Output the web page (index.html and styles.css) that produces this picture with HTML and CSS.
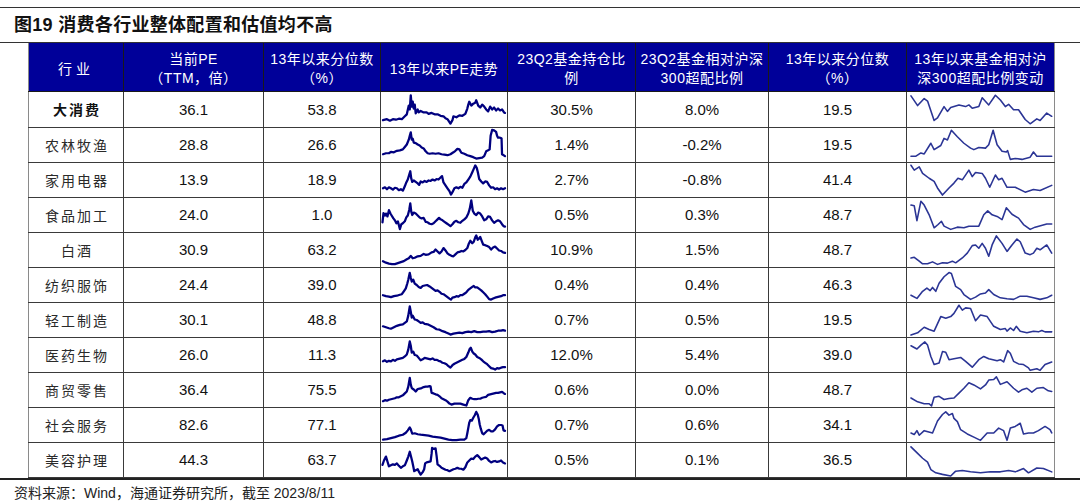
FILE: index.html
```html
<!DOCTYPE html>
<html lang="zh-CN">
<head>
<meta charset="utf-8">
<title>图19 消费各行业整体配置和估值均不高</title>
<link rel="stylesheet" href="styles.css">
</head>
<body>
<div class="page">
  <h1 class="title">图<span class="num">19</span> 消费各行业整体配置和估值均不高</h1>
  <div class="table-wrap">
    <table class="grid">
      <colgroup>
        <col class="c-name"><col class="c-pe"><col class="c-pct"><col class="c-trend">
        <col class="c-hold"><col class="c-over"><col class="c-pct2"><col class="c-chg">
      </colgroup>
      <thead>
        <tr>
          <th class="h-name">行业</th>
          <th>当前PE<br>（TTM，倍）</th>
          <th>13年以来分位数<br>（%）</th>
          <th>13年以来PE走势</th>
          <th>23Q2基金持仓比<br>例</th>
          <th>23Q2基金相对沪深<br>300超配比例</th>
          <th>13年以来分位数<br>（%）</th>
          <th>13年以来基金相对沪<br>深300超配比例变动</th>
        </tr>
      </thead>
      <tbody>
        <tr class="first">
          <td class="name bold">大消费</td><td>36.1</td><td>53.8</td>
          <td class="spark"><svg viewBox="0 0 127 35" preserveAspectRatio="none"><polyline class="pe" points="2,29 6,28 9,29.5 12,28 15,28.5 18,27.5 21,28 24,25 26,23 28,14 29,18 30,3.5 31,15 32,10 33,17 34,13 35,22 37,18 38,21 40,19.5 43,21 46,21 48,22.5 51,21.5 54,23 57,23 60,24.5 63,25 65,27 67,28 69,31 70,32.5 72,29 73,25 76,26 79,24 82,24.5 85,22.5 87,17 88,13 89,10 91,14 93,12 95,11 96,8.5 98,14 100,16 102,13 104,15 106,18 108,20 110,15 112,18 114,16 116,19 118,17 120,19 122,18 124,21 125,21.5"/></svg></td>
          <td>30.5%</td><td>8.0%</td><td>19.5</td>
          <td class="spark"><svg viewBox="0 0 148 35" preserveAspectRatio="none"><polyline class="fund" points="4,4 10.7,14 17.3,6.7 20.7,9.3 27.3,29.3 30.7,26.7 37.3,15 40.7,20 44,16 52.3,13.3 59,15 62.3,13.3 65.7,16.7 72.3,15 75.7,6 82.3,13.3 89,3.3 94,8.3 99,15 102.3,12.7 107.3,18.3 112.3,18.3 119,28.3 124,32.7 130.7,27.7 134,29.3 140.7,21.7 145.7,25"/></svg></td>
        </tr>
        <tr>
          <td class="name">农林牧渔</td><td>28.8</td><td>26.6</td>
          <td class="spark"><svg viewBox="0 0 127 35" preserveAspectRatio="none"><polyline class="pe" points="2,27 5,26 8,26 10,24.5 13,25 16,23.5 19,23 22,22 24,19.5 26,17 28,12 29,8 30,4.5 31,12 32,11 33,15 35,15.5 37,17 39,18 41,20 43,21 45,24 47,26 49,26.5 52,26 55,26.5 58,26 61,27 64,27.5 67,28 70,27 73,25 75,23.5 77,21.5 79,22 81,25.5 84,26.5 87,28 90,29 93,30 96,31.5 99,31 102,30.5 104,29 106,24 108,23 109.5,22 110.5,8 112,2 114,2.5 116,4 117,8 118,10 120,10 121.5,10.5 122,27 125,29"/></svg></td>
          <td>1.4%</td><td>-0.2%</td><td>19.5</td>
          <td class="spark"><svg viewBox="0 0 148 35" preserveAspectRatio="none"><polyline class="fund" points="4,29 9,29 14,25.7 17.3,26.7 24,15.7 27.3,22.3 34,18 37.3,10.7 40.7,12.3 44.7,2.3 50.7,9 57.3,15.7 64,20.7 67.3,22.3 72.3,20 79,20.7 82.3,17.3 86.7,2.3 90.7,17.3 95.7,24 100,24.7 101.3,23.3 104,32.3 109,31.3 115.7,32.3 124,30 127.3,24.7 130.7,29 145.7,29"/></svg></td>
        </tr>
        <tr>
          <td class="name">家用电器</td><td>13.9</td><td>18.9</td>
          <td class="spark"><svg viewBox="0 0 127 35" preserveAspectRatio="none"><polyline class="pe" points="2,26 4,25 6,27 8,25 10,26 12,27.5 14,25.5 16,26 18,28 20,27 22,28.5 24,24 25.5,20 27,17 28.5,12 29.5,8.5 30.5,16 31.5,19.5 33,18 35,19.5 37,21 38.5,22.5 40,19 42,20 44,18.5 46,19.5 48,18 50,18.5 52,17 54,18 56,16.5 58,17 60,15 61.5,13.5 63,20 65,23 67,26 69,29 70.5,32.5 72,30 74,26 76,25 78,26 80,24.5 82,25.5 84,21.5 86,20 88,17 90,14 92,9.5 93.5,6 95,2.5 96.5,5 97.5,9 99,16.5 101,19 103,21 105,19 107,19.5 109,23 111,25.5 113,25 115,27 117,26 119,27.5 121,26 123,27 125,26"/></svg></td>
          <td>2.7%</td><td>-0.8%</td><td>41.4</td>
          <td class="spark"><svg viewBox="0 0 148 35" preserveAspectRatio="none"><polyline class="fund" points="4,2.3 7.3,7.3 12.3,4 15.7,10.7 22.3,15.7 27.3,19 30.7,25.7 35.7,33 42.3,25.7 47.3,20.7 51.3,15.7 55.7,17.3 62.3,7.3 65.7,14 69,9.7 75.7,10.7 79,15.7 83.3,25 89,12.3 92.3,17.3 95.7,15.7 100.7,25 109,25 119,30 127.3,27.3 134,28.3 145.7,23"/></svg></td>
        </tr>
        <tr>
          <td class="name">食品加工</td><td>24.0</td><td>1.0</td>
          <td class="spark"><svg viewBox="0 0 127 35" preserveAspectRatio="none"><polyline class="pe" points="1.5,25 2.5,15.5 4,18 5,16 6.5,19 8,12.5 9.5,16 11,18.5 12.5,21 14,23 15.5,26 17,24 19,32 20.5,27 22,26 24,24 25.5,20 27,18 28.5,12 29.5,5.5 30.5,14 31.5,17.5 33,15 35,16 37,18 39,20 41,21 43,20.5 45,24.5 47,25 49,26.5 51,27 53,26 55,24 57,22 58.5,20.5 60,22 62,23 64,24.5 66,26 68,27.5 70,29 72,27 74,24.5 76,23.5 78,25 80,25.5 82,23.5 84,22 86,20 88,16 89.5,11 91,2.5 92.5,13 94,16 96,17.5 98,15 100,16 102,19 104,23 106,22 108,19 110,19.5 112,23 114,25.5 116,24 118,23 120,24 122,27 123.5,29 125,29.5"/></svg></td>
          <td>0.5%</td><td>0.3%</td><td>48.7</td>
          <td class="spark"><svg viewBox="0 0 148 35" preserveAspectRatio="none"><polyline class="fund" points="4,7.3 7.3,8 10,23.3 14,3.3 17.3,7.3 22.3,17.3 27.3,30.7 31.3,27.3 34.7,24 37.3,29 44,32.3 50.7,30 57.3,30.7 62.3,29 72.3,29 77.3,17.3 81.3,13.3 85.7,17.3 90.7,19 95.7,22.3 100,10 105.7,16.7 112.3,20.7 117.3,27.3 124,32.3 129,30 140.7,26.7 145.7,26.7"/></svg></td>
        </tr>
        <tr>
          <td class="name">白酒</td><td>30.9</td><td>63.2</td>
          <td class="spark"><svg viewBox="0 0 127 35" preserveAspectRatio="none"><polyline class="pe" points="2,29 5,30.5 8,31.5 11,32 14,32 17,31 20,30 23,29 26,27 28,26 30,23.5 32,26 34,25.5 37,24 40,23.5 43,21.5 45,22.5 48,22 51,20 53,19.5 55,17 57,19 59,21 61,19 63,15.5 65,18 67,21 69,22.5 71,23.5 73,24 75,22 77,20 79,19.5 81,18.5 83,19 85,17.5 87,15.5 88.5,11 90,8 92,10.5 93.5,9 95,4.5 96,2.5 97.5,7 99,5.5 100,4 101.5,8 103,12 105,12.5 107,13.5 109,14.5 111,17 113,15 115,14 117,16 119,18 121,18.5 123,20 125,20.5"/></svg></td>
          <td>10.9%</td><td>1.5%</td><td>48.7</td>
          <td class="spark"><svg viewBox="0 0 148 35" preserveAspectRatio="none"><polyline class="fund" points="4,25.7 7.3,25 12.3,29 15.7,31.7 20.7,31.7 25.7,29.7 30.7,32.3 35.7,30.7 40.7,31 45.7,29 49,30.7 55.7,25.7 60.7,20.7 65.7,13 69,12.3 72.3,15.7 75.7,10.7 79,15.7 82.3,24 85.7,12.3 90,3 95.7,10.7 100.7,19 105.7,12.3 110.7,6.3 114,9 119,20.7 124,22.3 127.3,20.7 130.7,15.7 134,17.3 140.7,12.3 145.7,20.7"/></svg></td>
        </tr>
        <tr>
          <td class="name">纺织服饰</td><td>24.4</td><td>39.0</td>
          <td class="spark"><svg viewBox="0 0 127 35" preserveAspectRatio="none"><polyline class="pe" points="2,28 5,29 8,29.5 10,30 13,29 16,28.5 19,27.5 21,27 23,24 25,21 26.5,16 27.5,12 29,5 30,10 31,14 32.5,12 34,16 36,17.5 38,19.5 40,20.5 42,18.5 44,18 46.5,17.5 49,19 51,20.5 53,22 55,23.5 57,23 59,24.5 61,26.5 63,27 65,28.5 67,30 69,31.5 70.5,32.5 72,30.5 74,30 76,29 78,29.5 80,28 82,28 84,26.5 86,25 88,22.5 90,21 92,19.5 93.5,18.5 95,20 97,20 99,21.5 101,23 103,25 105,27 107,29.5 109,32 111,32.5 113,31.5 115,30.5 117,30 119,29.5 121,29 123,28 125,28"/></svg></td>
          <td>0.4%</td><td>0.4%</td><td>46.3</td>
          <td class="spark"><svg viewBox="0 0 148 35" preserveAspectRatio="none"><polyline class="fund" points="4,28 10,31.3 15.7,24 20,20.7 23.3,23.3 25.7,20 29,24 32.3,15.7 37.3,9 42.3,4.7 44.7,5.7 49,19 54,22.3 57.3,27.3 64,32.3 69,30 74,26.7 79,25.7 82.3,22.3 87.3,27.3 94,30.7 100.7,31.7 107.3,32.3 114,29 120.7,29 127.3,30.7 134,32.3 140.7,30.7 145.7,28"/></svg></td>
        </tr>
        <tr>
          <td class="name">轻工制造</td><td>30.1</td><td>48.8</td>
          <td class="spark"><svg viewBox="0 0 127 35" preserveAspectRatio="none"><polyline class="pe" points="2,24 5,25 8,26 10,26.5 13,25 16,23.5 19,22.5 22,22 24,20.5 26,19 27.5,13 29,3.5 30,9 31,15 32,13 34,17 36,17.5 38,19 40,20.5 42,20 44,21.5 47,22 50,23.5 53,25 56,27 59,27.5 62,29 65,30 68,31.5 70,32.5 73,31.5 76,31 79,30.5 82,31 85,30 88,29.5 91,30 94,29 97,30 100,30 103,29.5 106,29.5 109,29 112,30 115,29.5 118,28.5 121,28.5 123,28 125,28.5"/></svg></td>
          <td>0.7%</td><td>0.5%</td><td>19.5</td>
          <td class="spark"><svg viewBox="0 0 148 35" preserveAspectRatio="none"><polyline class="fund" points="4,33 10.7,30.7 17.3,25 22.3,27.3 27.3,29 34,14 39,15.7 44,14 47.3,10.7 52.3,2.3 55.7,7.3 59,5 64,5.7 69,18.3 74,12.3 80.7,14 87.3,24 94,27.3 99,26.3 100.7,29 104,25.7 107.3,28.3 110,24 114,29 120.7,30.7 127.3,29 132.3,29.7 135.7,28.3 139,29.7 145.7,29.7"/></svg></td>
        </tr>
        <tr>
          <td class="name">医药生物</td><td>26.0</td><td>11.3</td>
          <td class="spark"><svg viewBox="0 0 127 35" preserveAspectRatio="none"><polyline class="pe" points="2,24 4,23 6,24.5 8,23.5 10,24 12,22.5 14,23.5 16,22 18,21.5 20,21 22,20.5 24,19 26,17 27.5,12 29,3.5 30,8 31,15 32.5,14 34,17.5 36,18 38,20.5 40,23 42,22 44,20.5 46,21 48,21.5 50,22 52,21 54,22.5 56,22.5 58,23.5 60,24 62,25.5 64,26 66,27 68,29 70,30.5 72,28 74,26.5 76,25.5 78,24.5 80,23.5 82,22.5 84,21.5 86,19.5 88,15 89.5,11 90.5,10 92,14 93.5,16 95,17 97,19.5 99,20.5 101,22 103,24 105,25.5 107,27 109,29 111,31 113,31.5 115,32.5 117,31 119,31.5 121,30.5 123,30 125,30"/></svg></td>
          <td>12.0%</td><td>5.4%</td><td>39.0</td>
          <td class="spark"><svg viewBox="0 0 148 35" preserveAspectRatio="none"><polyline class="fund" points="4,8 10,11.3 14,7.3 18,4 20.7,7.3 24,19 27.3,27.3 32.3,25.7 35.7,14 39,14.7 42.3,22.3 47.3,21.3 54,20 59,24 65.7,30 72.3,22.3 77.3,19 82.3,21.3 90.7,23.3 94,22.3 97.3,24.7 101.3,13 104,15.7 107.3,24 112.3,26.7 117.3,27.3 122.3,30.7 124,33.3 130.7,31.7 134,33.3 139,27.3 145.7,24.7"/></svg></td>
        </tr>
        <tr>
          <td class="name">商贸零售</td><td>36.4</td><td>75.5</td>
          <td class="spark"><svg viewBox="0 0 127 35" preserveAspectRatio="none"><polyline class="pe" points="2,29 4,28 6,28.5 8,27.5 10,27 12,26.5 14,26 16,25 18,25 20,24 22,23 24,21 26,19 27.5,14 29,5 30,12 31,15.5 33,17 35,19 37,16.5 39,16 41,15.5 43,14.5 45,14 47,14 49,13.5 50,14 51,20.5 53,21 55,22 57,22.5 59,24 61,26 63,27 65,28 67,29.5 69,31.5 71,32.5 74,31.5 77,31.5 80,31.5 83,32.5 86,33.5 88,28 90,25.5 92,26.5 94,27 96,27 98,26.5 100,26.5 102,25.5 104,25 106,24.5 108,22.5 110,22 112,21.5 114,21 116,20.5 118,20.5 120,20 122,19.5 124,21 125,21.5"/></svg></td>
          <td>0.6%</td><td>0.0%</td><td>48.7</td>
          <td class="spark"><svg viewBox="0 0 148 35" preserveAspectRatio="none"><polyline class="fund" points="4,25.7 10.7,29.7 17.3,31.7 22.3,31.7 24.7,34 27.3,25 32.3,24 37.3,27.3 42.3,26.3 47.3,25.7 52.3,20.7 57.3,15.7 62.3,10 67.3,12.3 74,16.3 79,12.3 82.3,7.3 87.3,6.7 90,4 94,11.7 100.7,9 107.3,15.7 112.3,19.7 115.7,17.3 120.7,15.7 125.7,19.7 130.7,15.7 137.3,15 142.3,18.3 145.7,19"/></svg></td>
        </tr>
        <tr>
          <td class="name">社会服务</td><td>82.6</td><td>77.1</td>
          <td class="spark"><svg viewBox="0 0 127 35" preserveAspectRatio="none"><polyline class="pe" points="2,32.5 6,32 10,31 14,30 18,28.5 22,27.5 25,25.5 27,23 29,20 30,22 31.5,26.5 34,26 37,27 40,27.5 44,28 48,28.5 52,29.5 56,30 60,30.5 64,31.5 68,32.5 72,33 76,33 80,32.5 84,32.5 86,31 87,26 88,20.5 89,15 90,12.5 91.5,13 93,10 94.5,7.5 96,4 97.5,7 98.5,11 99.5,17 100.5,21 102,26 103.5,27 105,25.5 107,23.5 109,22.5 111,24 113,24 115,22 117,19 119,17.5 121,17.5 122.5,18 123.5,23 125,23.5"/></svg></td>
          <td>0.7%</td><td>0.6%</td><td>34.1</td>
          <td class="spark"><svg viewBox="0 0 148 35" preserveAspectRatio="none"><polyline class="fund" points="4,25.7 7.3,27.3 10,23.3 12.3,28 17.3,23.3 25.7,25.7 30.7,13.3 35.7,6.7 39,4 42.3,7.3 45.7,5.7 47.3,10.7 50.7,14 54,22.3 60.7,26.7 67.3,30 74,33.3 80.7,25.7 87.3,25.7 92.3,20.7 97.3,23.3 100.7,33.3 104,20.7 109,19 114,15.7 117.3,26.7 122.3,25.7 127.3,25.7 132.3,23.3 139,19 144,22.3 145.7,25.7"/></svg></td>
        </tr>
        <tr>
          <td class="name">美容护理</td><td>44.3</td><td>63.7</td>
          <td class="spark"><svg viewBox="0 0 127 35" preserveAspectRatio="none"><polyline class="pe" points="1.5,22.5 3,18 5,14 6.5,19 8,24 10,23 12,22 14,22.5 16,21 18,23.5 20,25.5 22,24 24,23 26,18 27.5,14 29,9 30.5,15 31.5,19 32.5,24 33.5,29 35,28 37,27 38.5,30 40,32.5 42,30 43.5,27 44.5,21 46,20 48,19.5 50,19 51,11 51.5,5 53,6 55,5.5 56,13 57,22 59,23.5 61,25.5 63,26.5 65,27.5 67,28 69,29 71,28 73,27 75,26.5 77,25.5 79,26.5 81,26.5 83,27.5 85,25 87,20 89,18 91,16 93,16.5 95,14 97,12.5 99,14.5 101,17 103,16 105,15 107,16 109,18.5 111,20 113,19 115,18.5 117,19.5 119,19 121,18 123,20 125,21"/></svg></td>
          <td>0.5%</td><td>0.1%</td><td>36.5</td>
          <td class="spark"><svg viewBox="0 0 148 35" preserveAspectRatio="none"><polyline class="fund" points="4,4 10.7,10.7 15.7,15.7 20.7,19.7 24,27.3 29,30.7 35.7,32.3 44,34 49,29 55.7,28.3 64,29.7 74,30.7 84,29.7 94,29.7 102.3,28.3 109,29.7 117.3,26.3 122.3,30.7 130.7,25.7 137.3,26.3 145.7,29.7"/></svg></td>
        </tr>
      </tbody>
    </table>
  </div>
  <p class="source">资料来源：Wind，海通证券研究所，截至 2023/8/11</p>
</div>
</body>
</html>
```

FILE: styles.css
```css
* { box-sizing: border-box; }

body {
  margin: 0;
  background: #ffffff;
  color: #111111;
  font-family: "Liberation Sans", "Noto Sans CJK SC", sans-serif;
}

.page {
  width: 1080px;
  padding-top: 7px;
}

.title {
  margin: 0;
  height: 36px;
  padding-left: 14px;
  border-top: 1px solid #333333;
  border-bottom: 1px solid #333333;
  font-family: "Liberation Sans", "Noto Sans CJK SC", sans-serif;
  font-size: 18px;
  font-weight: bold;
  line-height: 34px;
  color: #111111;
  letter-spacing: 0.3px;
}

.title .num {
  font-family: "Liberation Sans", sans-serif;
}

.table-wrap {
  padding-left: 28px;
}

.grid {
  border-collapse: collapse;
  table-layout: fixed;
  width: 1026px;
}

.c-name { width: 95px; }
.c-pe { width: 140px; }
.c-pct { width: 117px; }
.c-trend { width: 127px; }
.c-hold { width: 128px; }
.c-over { width: 133px; }
.c-pct2 { width: 138px; }
.c-chg { width: 148px; }

.grid th {
  height: 48px;
  padding: 5px 0 0;
  background: #000099;
  color: #ffffff;
  border: 1px solid #1a1a1a;
  border-top: 0;
  font-family: "Liberation Sans", "Noto Sans CJK SC", sans-serif;
  font-size: 14px;
  font-weight: normal;
  line-height: 19px;
  letter-spacing: 0.5px;
  white-space: nowrap;
  text-align: center;
  vertical-align: middle;
}

.grid th.h-name {
  letter-spacing: 4px;
}

.grid td {
  height: 35px;
  padding: 0;
  border: 1px solid #3a3a3a;
  text-align: center;
  vertical-align: middle;
  font-size: 15px;
  color: #111111;
}

.grid tr.first td {
  height: 36px;
}

.grid td.name {
  font-family: "Noto Sans CJK SC", sans-serif;
  font-size: 14px;
  letter-spacing: 2px;
  color: #2a2a2a;
  padding-left: 2px;
}

.grid td.bold {
  font-weight: bold;
  color: #111111;
}

.grid tr > :first-child {
  border-left-color: #8a8a8a;
}

.grid tr > :last-child {
  border-right-color: #8a8a8a;
}

.grid td.spark {
  padding: 0;
}

.spark svg {
  display: block;
  width: 100%;
  height: 34px;
}

.pe {
  fill: none;
  stroke: #00007f;
  stroke-width: 2.3;
  stroke-linejoin: round;
  stroke-linecap: round;
}

.fund {
  fill: none;
  stroke: #2b3595;
  stroke-width: 1.6;
  stroke-linejoin: round;
  stroke-linecap: round;
}

.source {
  margin: 0;
  padding: 3px 0 0 14px;
  border-top: 2px solid #222222;
  font-family: "Liberation Sans", "Noto Sans CJK SC", sans-serif;
  font-size: 14px;
  line-height: 20px;
  color: #222222;
}
```
